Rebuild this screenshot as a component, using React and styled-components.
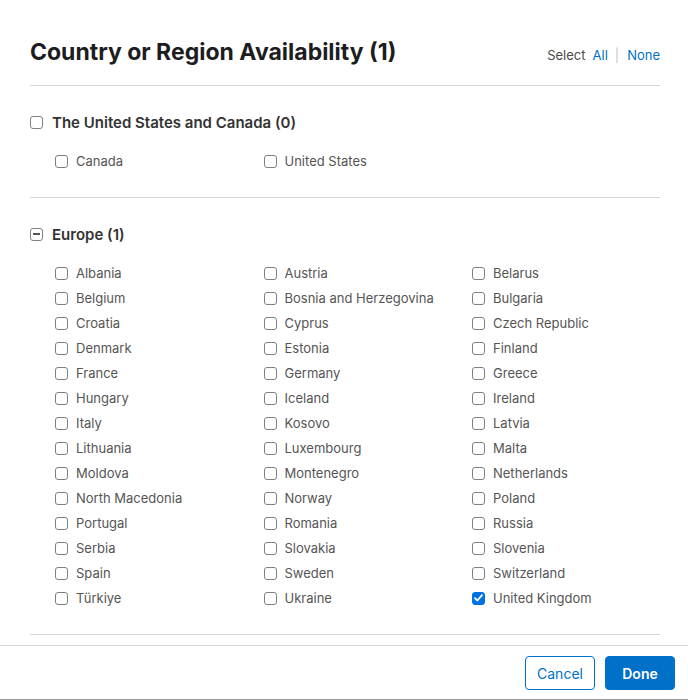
import styled, { createGlobalStyle } from "styled-components";

const GlobalStyle = createGlobalStyle`
  html, body {
    margin: 0;
    padding: 0;
    background: #fff;
  }
  body {
    font-family: Inter, "Noto Sans", "Liberation Sans", sans-serif;
    -webkit-font-smoothing: antialiased;
  }
`;

const Dialog = styled.div`
  height: 700px;
  box-sizing: border-box;
  display: flex;
  flex-direction: column;
  background: #fff;
  border-bottom: 1px solid #9a9a9a;
`;

const Content = styled.div`
  flex: 1;
  padding: 0 28px 10px 30px;
`;

const Header = styled.header`
  display: flex;
  align-items: baseline;
  justify-content: space-between;
  padding: 38px 0 19px;
  border-bottom: 1px solid #d6d6d6;
`;

const Title = styled.h1`
  margin: 0;
  font-size: 23px;
  line-height: 28px;
  font-weight: 700;
  color: #1d1d1f;
`;

const SelectLinks = styled.div`
  display: flex;
  align-items: baseline;
  gap: 7px;
  font-size: 13px;
  color: #4a4a4a;
`;

const LinkButton = styled.button`
  border: 0;
  background: none;
  padding: 0;
  font: inherit;
  color: #0070c9;
  cursor: pointer;
`;

const Separator = styled.span`
  color: #c8c8c8;
  margin-right: 1px;
`;

const Section = styled.section`
  padding: 26px 0 23.5px;
  border-bottom: 1px solid #d6d6d6;
`;

const GroupLabel = styled.label`
  display: flex;
  align-items: center;
  gap: 9px;
  height: 20px;
  font-size: 15px;
  font-weight: 600;
  color: #333;
`;

const ItemGrid = styled.div`
  display: grid;
  grid-template-columns: repeat(3, 208.5px);
  grid-auto-rows: 25px;
  margin-top: 16.5px;
  padding-left: 25px;
`;

const Item = styled.label`
  display: flex;
  align-items: center;
  gap: 8px;
  font-size: 13px;
  color: #555;
`;

const Box = styled.span`
  flex: none;
  width: 13px;
  height: 13px;
  box-sizing: border-box;
  border-radius: 3px;
  border: 1px solid ${(p) => (p.$checked ? "#0071e3" : "#808080")};
  background: ${(p) => (p.$checked ? "#0071e3" : "#fff")};
  display: flex;
  align-items: center;
  justify-content: center;
`;

const Dash = styled.span`
  width: 7px;
  height: 1.5px;
  background: #555;
`;

const Footer = styled.footer`
  display: flex;
  justify-content: flex-end;
  gap: 10px;
  padding: 10px 13px 0;
  height: 54px;
  flex: none;
  box-sizing: border-box;
  border-top: 1px solid #d6d6d6;
`;

const Button = styled.button`
  width: 70px;
  height: 34px;
  border-radius: 4px;
  font-family: inherit;
  font-size: 14px;
  font-weight: ${(p) => (p.$primary ? 600 : 400)};
  border: 1px solid #0070c9;
  background: ${(p) => (p.$primary ? "#0070c9" : "#fff")};
  color: ${(p) => (p.$primary ? "#fff" : "#0070c9")};
  cursor: pointer;
`;

function Checkbox({ state }) {
  return (
    <Box $checked={state === "checked"}>
      {state === "checked" && (
        <svg width="9" height="8" viewBox="0 0 9 8">
          <path d="M1 4.2 L3.4 6.5 L8 1.2" fill="none" stroke="#fff" strokeWidth="1.8" strokeLinecap="round" strokeLinejoin="round" />
        </svg>
      )}
      {state === "mixed" && <Dash />}
    </Box>
  );
}

const groups = [
  {
    name: "The United States and Canada",
    items: ["Canada", "United States"],
  },
  {
    name: "Europe",
    items: [
      "Albania", "Austria", "Belarus",
      "Belgium", "Bosnia and Herzegovina", "Bulgaria",
      "Croatia", "Cyprus", "Czech Republic",
      "Denmark", "Estonia", "Finland",
      "France", "Germany", "Greece",
      "Hungary", "Iceland", "Ireland",
      "Italy", "Kosovo", "Latvia",
      "Lithuania", "Luxembourg", "Malta",
      "Moldova", "Montenegro", "Netherlands",
      "North Macedonia", "Norway", "Poland",
      "Portugal", "Romania", "Russia",
      "Serbia", "Slovakia", "Slovenia",
      "Spain", "Sweden", "Switzerland",
      "Türkiye", "Ukraine", "United Kingdom",
    ],
  },
];

const selected = ["United Kingdom"];

export default function App() {
  return (
    <>
      <GlobalStyle />
      <Dialog>
        <Content>
          <Header>
            <Title>Country or Region Availability ({selected.length})</Title>
            <SelectLinks>
              Select
              <LinkButton>All</LinkButton>
              <Separator>|</Separator>
              <LinkButton>None</LinkButton>
            </SelectLinks>
          </Header>
          {groups.map((g) => {
            const count = g.items.filter((i) => selected.includes(i)).length;
            const state = count === 0 ? "none" : count === g.items.length ? "checked" : "mixed";
            return (
              <Section key={g.name}>
                <GroupLabel>
                  <Checkbox state={state} />
                  {g.name} ({count})
                </GroupLabel>
                <ItemGrid>
                  {g.items.map((item) => (
                    <Item key={item}>
                      <Checkbox state={selected.includes(item) ? "checked" : "none"} />
                      {item}
                    </Item>
                  ))}
                </ItemGrid>
              </Section>
            );
          })}
        </Content>
        <Footer>
          <Button>Cancel</Button>
          <Button $primary>Done</Button>
        </Footer>
      </Dialog>
    </>
  );
}
